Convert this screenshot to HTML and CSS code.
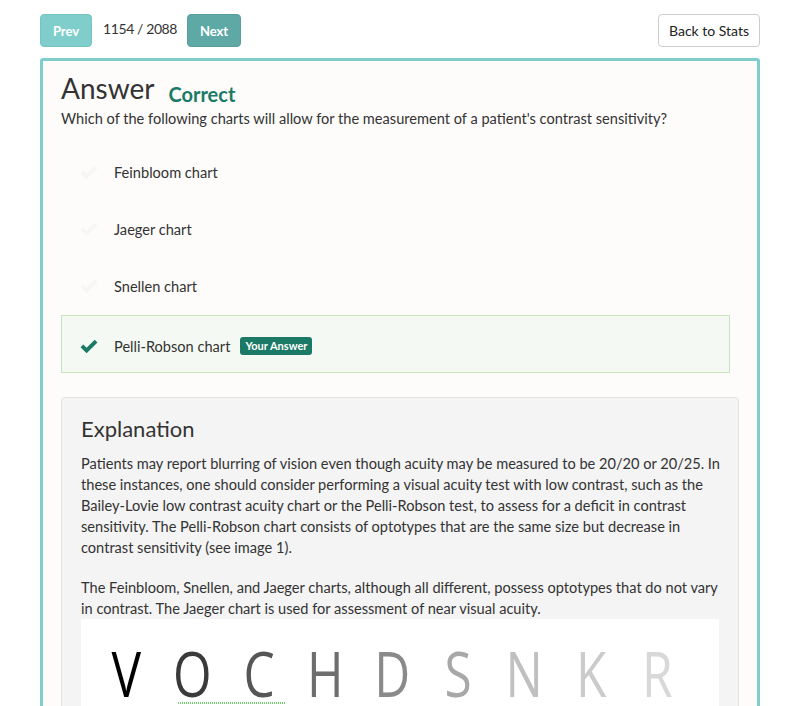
FILE: index.html
```html
<!DOCTYPE html>
<html>
<head>
<meta charset="utf-8">
<link rel="stylesheet" href="styles.css">
</head>
<body>
<div class="page">
  <div class="topbar">
    <div class="nav">
      <button class="btn btn-prev">Prev</button>
      <span class="counter">1154 / 2088</span>
      <button class="btn btn-next">Next</button>
    </div>
    <button class="btn btn-back">Back to Stats</button>
  </div>

  <div class="card">
    <div class="title-row">
      <h1 class="title">Answer</h1>
      <span class="status">Correct</span>
    </div>
    <p class="question">Which of the following charts will allow for the measurement of a patient's contrast sensitivity?</p>

    <div class="options">
      <div class="option">
        <svg class="check faint" viewBox="0 0 20 15"><path d="M1.5 8.2 L4.3 5.5 L7.6 8.8 L15.7 0.8 L18.5 3.5 L7.6 14.3 Z"/></svg>
        <span class="opt-text">Feinbloom chart</span>
      </div>
      <div class="option">
        <svg class="check faint" viewBox="0 0 20 15"><path d="M1.5 8.2 L4.3 5.5 L7.6 8.8 L15.7 0.8 L18.5 3.5 L7.6 14.3 Z"/></svg>
        <span class="opt-text">Jaeger chart</span>
      </div>
      <div class="option">
        <svg class="check faint" viewBox="0 0 20 15"><path d="M1.5 8.2 L4.3 5.5 L7.6 8.8 L15.7 0.8 L18.5 3.5 L7.6 14.3 Z"/></svg>
        <span class="opt-text">Snellen chart</span>
      </div>
      <div class="option selected">
        <svg class="check" viewBox="0 0 20 15"><path d="M1.5 8.2 L4.3 5.5 L7.6 8.8 L15.7 0.8 L18.5 3.5 L7.6 14.3 Z"/></svg>
        <span class="opt-text">Pelli-Robson chart</span>
        <span class="badge">Your Answer</span>
      </div>
    </div>

    <div class="explanation">
      <h2 class="exp-title">Explanation</h2>
      <p class="exp-text">Patients may report blurring of vision even though acuity may be measured to be 20/20 or 20/25. In these instances, one should consider performing a visual acuity test with low contrast, such as the Bailey-Lovie low contrast acuity chart or the Pelli-Robson test, to assess for a deficit in contrast sensitivity. The Pelli-Robson chart consists of optotypes that are the same size but decrease in contrast sensitivity (see image 1).</p>
      <p class="exp-text">The Feinbloom, Snellen, and Jaeger charts, although all different, possess optotypes that do not vary in contrast. The Jaeger chart is used for assessment of near visual acuity.</p>
      <div class="chart-image">
        <span class="letter l1">V</span>
        <span class="letter l2">O</span>
        <span class="letter l3">C</span>
        <span class="letter l4">H</span>
        <span class="letter l5">D</span>
        <span class="letter l6">S</span>
        <span class="letter l7">N</span>
        <span class="letter l8">K</span>
        <span class="letter l9">R</span>
        <span class="squiggle"></span>
      </div>
    </div>
  </div>
</div>
</body>
</html>
```

FILE: styles.css
```css
* { box-sizing: border-box; }
html, body { margin: 0; padding: 0; background: #ffffff; }
body {
  font-family: Lato, "Open Sans", sans-serif;
  color: #333333;
  font-size: 14.6px;
}
.page {
  padding: 14px 40px 0 40px;
  width: 800px;
}
.topbar {
  display: flex;
  justify-content: space-between;
  align-items: center;
  height: 33px;
}
.nav {
  display: flex;
  align-items: center;
}
.btn {
  font-family: Lato, sans-serif;
  height: 33px;
  border-radius: 4px;
  font-size: 14px;
  padding: 0;
  border: 1px solid transparent;
  cursor: pointer;
}
.btn-prev {
  background: #80cecb;
  border-color: #74c4c1;
  color: #ffffff;
  font-weight: 700;
  font-size: 13px;
  width: 52px;
}
.btn-next {
  background: #5ea9a6;
  border-color: #579f9c;
  color: #ffffff;
  font-weight: 700;
  font-size: 13px;
  width: 54px;
}
.counter {
  font-size: 14px;
  letter-spacing: -0.4px;
  color: #333;
  margin: 0 10px 0 11px;
  position: relative;
  top: -2px;
}
.btn-back {
  background: #ffffff;
  border-color: #cccccc;
  color: #222;
  width: 102px;
  font-size: 14px;
}
.card {
  margin-top: 11px;
  border: 3px solid #80cecb;
  border-radius: 3px;
  background: #fdfcfb;
  padding: 9px 18px 30px 18px;
  height: 700px;
}
.title-row {
  display: flex;
  align-items: baseline;
}
.title {
  font-size: 28px;
  font-weight: 400;
  margin: 0;
  line-height: 36px;
  color: #333;
}
.status {
  font-size: 20px;
  font-weight: 700;
  color: #1b7a66;
  margin-left: 14px;
  position: relative;
  top: 3px;
}
.question {
  margin: 3px 0 0 0;
  line-height: 20px;
  font-size: 14.6px;
}
.options {
  margin-top: 15px;
  margin-right: 9px;
}
.option {
  display: flex;
  align-items: center;
  height: 57px;
  padding-left: 17px;
  border: 1px solid transparent;
}
.option.selected {
  height: 58px;
  background: #f4faf3;
  border-color: #c6e5bf;
  padding-top: 4px;
}
.check {
  width: 20px;
  height: 15px;
  fill: #1b7a66;
  margin-right: 15px;
  flex: none;
}
.check.faint { fill: #f6f6f4; }
.opt-text {
  font-size: 14.6px;
  color: #333;
}
.badge {
  margin-left: 10px;
  background: #1b7a66;
  color: #ffffff;
  font-size: 11px;
  font-weight: 700;
  border-radius: 3px;
  height: 18px;
  line-height: 18px;
  padding: 0 5px;
}
.explanation {
  margin-top: 24px;
  background: #f4f4f4;
  border: 1px solid #e3e3e3;
  border-radius: 4px;
  padding: 17px 19px 20px 19px;
}
.exp-title {
  font-size: 22px;
  font-weight: 400;
  margin: 0 0 10px 0;
  line-height: 28px;
  color: #333;
}
.exp-text {
  margin: 0 -8px 19px 0;
  line-height: 21px;
  font-size: 14.6px;
}
.exp-text + .exp-text { margin-bottom: 0; }
.chart-image {
  position: relative;
  margin-top: 0;
  background: #ffffff;
  height: 130px;
  display: flex;
  align-items: flex-start;
  padding: 14px 0 0 12px;
}
.letter {
  width: 66.4px;
  text-align: center;
  font-family: "Open Sans", sans-serif;
  font-weight: 400;
  font-size: 62px;
  line-height: 80px;
  transform: scaleX(0.8);
}
.l1 { color: #000000; }
.l2 { color: #3a3a3a; }
.l3 { color: #565656; }
.l4 { color: #6e6e6e; }
.l5 { color: #8a8a8a; }
.l6 { color: #a8a8a8; }
.l7 { color: #c0c0c0; }
.l8 { color: #cbcbcb; }
.l9 { color: #d8d8d8; }
.squiggle {
  position: absolute;
  left: 97px;
  top: 83px;
  width: 107px;
  height: 2px;
  background: repeating-linear-gradient(90deg, #6fcf6f 0 1px, transparent 1px 2px);
}
```
